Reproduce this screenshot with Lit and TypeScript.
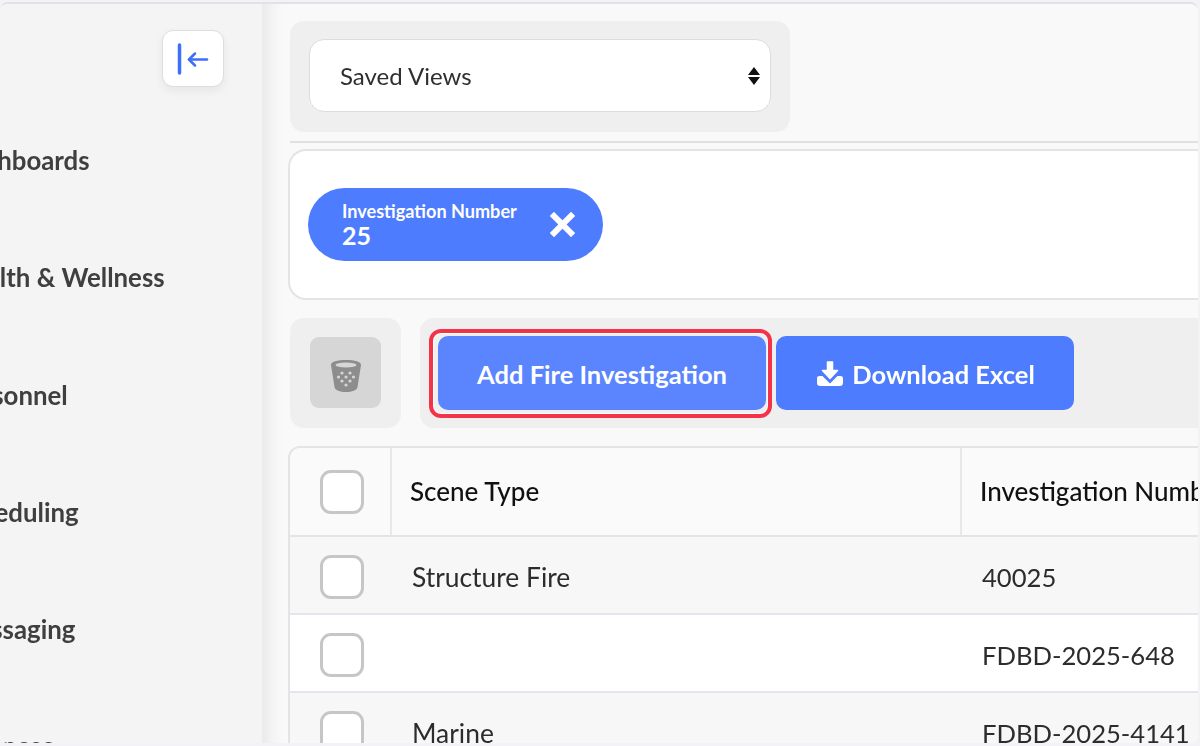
import { LitElement, html, css, svg } from "lit";
import { customElement } from "lit/decorators.js";

const navItems = ["Dashboards", "Health & Wellness", "Personnel", "Scheduling", "Messaging", "Finances"];

const rows = [
  { scene: "Structure Fire", num: "40025" },
  { scene: "", num: "FDBD-2025-648" },
  { scene: "Marine", num: "FDBD-2025-4141" },
];

@customElement("app-root")
export class AppRoot extends LitElement {
  static styles = css`
    :host {
      display: block;
      width: 1200px;
      height: 746px;
      overflow: hidden;
      background: #f3f3f7;
      font-family: Lato, "Liberation Sans", sans-serif;
      color: #222;
    }
    .frame {
      display: flex;
      box-sizing: border-box;
      height: 741px;
      margin-top: 2px;
      margin-right: 2px;
      border-top: 2px solid #e2e2e6;
      border-radius: 8px;
      overflow: hidden;
      background: #f9f9f9;
      filter: blur(0.4px);
    }
    .side {
      width: 262px;
      flex: none;
      background: #f4f4f5;
      display: flex;
      flex-direction: column;
      overflow: hidden;
    }
    .collapse-wrap {
      display: flex;
      justify-content: flex-end;
      padding: 26px 38px 0 0;
    }
    .collapse {
      width: 62px;
      height: 57px;
      box-sizing: border-box;
      background: #fff;
      border: 1px solid #dedede;
      border-radius: 11px;
      box-shadow: 0 4px 10px rgba(0, 0, 0, 0.06);
      display: flex;
      align-items: center;
      justify-content: center;
    }
    .nav {
      display: flex;
      flex-direction: column;
      gap: 86.3px;
      margin-top: 58px;
      margin-left: -46.5px;
      white-space: nowrap;
    }
    .nav div {
      height: 31px;
      line-height: 31px;
      font-size: 25.8px;
      font-weight: 700;
      color: #3f3f3f;
    }
    .main {
      flex: 1;
      min-width: 0;
      padding: 17px 0 0 28px;
      overflow: hidden;
      box-shadow: inset 22px 0 18px -16px rgba(0, 0, 0, 0.08);
    }
    .views {
      width: 500px;
      height: 111px;
      box-sizing: border-box;
      background: #efefef;
      border-radius: 14px;
      padding: 18px 19px;
    }
    .select {
      width: 462px;
      height: 73px;
      box-sizing: border-box;
      background: #fff;
      border: 1.5px solid #dcdcdc;
      border-radius: 15px;
      display: flex;
      align-items: center;
      justify-content: space-between;
      padding: 0 10px 0 30px;
      font-size: 24px;
      color: #2f2f2f;
    }
    hr {
      border: 0;
      height: 2px;
      background: #e0e0e0;
      margin: 9px 0 6px;
    }
    .filters {
      height: 151px;
      box-sizing: border-box;
      margin-left: -2px;
      background: #fff;
      border: 2px solid #e4e4e4;
      border-right: 0;
      border-radius: 18px 0 0 18px;
      padding-left: 18px;
      display: flex;
      align-items: center;
    }
    .pill {
      width: 295px;
      height: 73px;
      box-sizing: border-box;
      background: #4d7cfe;
      color: #fff;
      border-radius: 37px;
      padding: 0 28px 0 34px;
      display: flex;
      align-items: center;
      justify-content: space-between;
    }
    .pill-text {
      padding-top: 2px;
    }
    .pill small {
      display: block;
      font-size: 18.1px;
      line-height: 20px;
      font-weight: 700;
    }
    .pill b {
      display: block;
      font-size: 25px;
      line-height: 29px;
      font-weight: 700;
    }
    .tools {
      display: flex;
      gap: 19px;
      margin-top: 18px;
    }
    .trash-box {
      width: 111px;
      height: 110px;
      flex: none;
      box-sizing: border-box;
      background: #efefef;
      border-radius: 14px;
      padding: 19px 20px;
    }
    .trash {
      width: 71px;
      height: 71px;
      background: #d6d6d6;
      border-radius: 9px;
      display: flex;
      align-items: center;
      justify-content: center;
      padding-top: 7px;
      box-sizing: border-box;
    }
    .actions {
      flex: 1;
      height: 110px;
      box-sizing: border-box;
      background: #efefef;
      border-radius: 14px 0 0 14px;
      padding-left: 18px;
      display: flex;
      align-items: center;
      gap: 10px;
    }
    .btn {
      height: 74px;
      box-sizing: border-box;
      border-radius: 10px;
      background: #4d7cfe;
      color: #fff;
      font-size: 25.5px;
      font-weight: 700;
      display: flex;
      align-items: center;
      justify-content: center;
      gap: 9px;
      padding-top: 1px;
      position: relative;
    }
    .add {
      width: 328px;
      background: #5a85ff;
    }
    .mark {
      position: absolute;
      inset: -7px -6px -8px -9px;
      border: 4px solid #f2334a;
      border-radius: 12px;
      box-shadow: inset 0 0 0 1px #fff;
    }
    .dl {
      width: 298px;
      padding-left: 2px;
    }
    .table {
      margin: 18px 0 0 -2px;
      border: 2px solid #e4e4e4;
      border-right: 0;
      border-bottom: 0;
      border-top-left-radius: 12px;
      overflow: hidden;
    }
    .row {
      display: grid;
      grid-template-columns: 100px 570px 1fr;
      height: 78px;
      box-sizing: border-box;
      border-bottom: 2px solid #e3e6ef;
      background: #f7f7f7;
      align-items: center;
      padding-top: 3px;
      font-size: 26.4px;
      color: #2c2c2c;
    }
    .row.alt {
      background: #fff;
    }
    .row.head {
      height: 89px;
      padding-top: 0;
      background: #fafafa;
      border-bottom-color: #e4e4e4;
      font-size: 26px;
      font-weight: 500;
      color: #111;
    }
    .cell {
      height: 100%;
      display: flex;
      align-items: center;
      padding-left: 22px;
      box-sizing: border-box;
      white-space: nowrap;
    }
    .cell.num {
      font-size: 25.6px;
    }
    .head .cell {
      border-left: 2px solid #e8e8e8;
      padding-left: 18px;
      padding-bottom: 2px;
    }
    .cell.check-cell,
    .head .cell.check-cell {
      border-left: 0;
      padding: 0 0 0 3px;
      justify-content: center;
    }
    .check {
      width: 44px;
      height: 44px;
      box-sizing: border-box;
      background: #fff;
      border: 3px solid #c6c6c6;
      border-radius: 11px;
    }
  `;

  private icon(body: unknown, w: number, h: number, vb: string) {
    return html`<svg width=${w} height=${h} viewBox=${vb} aria-hidden="true">${body}</svg>`;
  }

  render() {
    return html`
      <div class="frame">
        <aside class="side">
          <div class="collapse-wrap">
            <div class="collapse">
              ${this.icon(
                svg`<g fill="none" stroke="#3d6ffa" stroke-linecap="round" stroke-linejoin="round">
                  <path stroke-width="3.5" d="M3.5 3V31"/><path stroke-width="2.5" d="M13 17.5H31"/><path stroke-width="2.5" d="M19 11.5L13 17.5L19 23.5"/></g>`,
                34, 34, "0 0 34 34"
              )}
            </div>
          </div>
          <nav class="nav">
            ${navItems.map((n) => html`<div>${n}</div>`)}
          </nav>
        </aside>
        <main class="main">
          <div class="views">
            <div class="select">
              <span>Saved Views</span>
              ${this.icon(
                svg`<path fill="#111" d="M6 0L12 8H0Z"/><path fill="#111" d="M6 18L0 10H12Z"/>`,
                12, 18, "0 0 12 18"
              )}
            </div>
          </div>
          <hr />
          <div class="filters">
            <div class="pill">
              <div class="pill-text"><small>Investigation Number</small><b>25</b></div>
              ${this.icon(
                svg`<path d="M4 4L21 21M21 4L4 21" stroke="#fff" stroke-width="6" stroke-linecap="square" fill="none"/>`,
                25, 25, "0 0 25 25"
              )}
            </div>
          </div>
          <div class="tools">
            <div class="trash-box">
              <div class="trash">
                ${this.icon(
                  svg`<path fill="#8d8d8d" d="M0 5C0 1.5 6 0 15 0S30 1.5 30 5L26.5 27C26 30.5 21 32 15 32S4 30.5 3.5 27Z"/>
                  <ellipse cx="15" cy="5" rx="10.5" ry="2.4" fill="#d6d6d6"/>
                  <g fill="#d6d6d6"><circle cx="11" cy="13" r="1.6"/><circle cx="19" cy="13" r="1.6"/><circle cx="7.5" cy="17" r="1.6"/><circle cx="15" cy="17" r="1.6"/><circle cx="22.5" cy="17" r="1.6"/><circle cx="11" cy="21" r="1.6"/><circle cx="19" cy="21" r="1.6"/><circle cx="15" cy="25" r="1.6"/></g>`,
                  30, 32, "0 0 30 32"
                )}
              </div>
            </div>
            <div class="actions">
              <div class="btn add">Add Fire Investigation<span class="mark"></span></div>
              <div class="btn dl">
                ${this.icon(
                  svg`<path fill="#fff" stroke="#fff" stroke-width="1.5" stroke-linejoin="round" d="M10.5 1H15.5V9.5H20.5L13 17.5L5.5 9.5H10.5Z"/><path fill="#fff" d="M0 17.5C0 15.8 1 15 2.5 15H5.5L13 22.5L20.5 15H23.5C25 15 26 15.8 26 17.5V21.5C26 24 25 25 22.5 25H3.5C1 25 0 24 0 21.5Z"/>`,
                  26, 25, "0 0 26 25"
                )}
                Download Excel
              </div>
            </div>
          </div>
          <div class="table">
            <div class="row head">
              <div class="cell check-cell"><div class="check"></div></div>
              <div class="cell">Scene Type</div>
              <div class="cell">Investigation Number</div>
            </div>
            ${rows.map(
              (r, i) => html`<div class="row ${i % 2 ? "alt" : ""}">
                <div class="cell check-cell"><div class="check"></div></div>
                <div class="cell">${r.scene}</div>
                <div class="cell num">${r.num}</div>
              </div>`
            )}
          </div>
        </main>
      </div>
    `;
  }
}
